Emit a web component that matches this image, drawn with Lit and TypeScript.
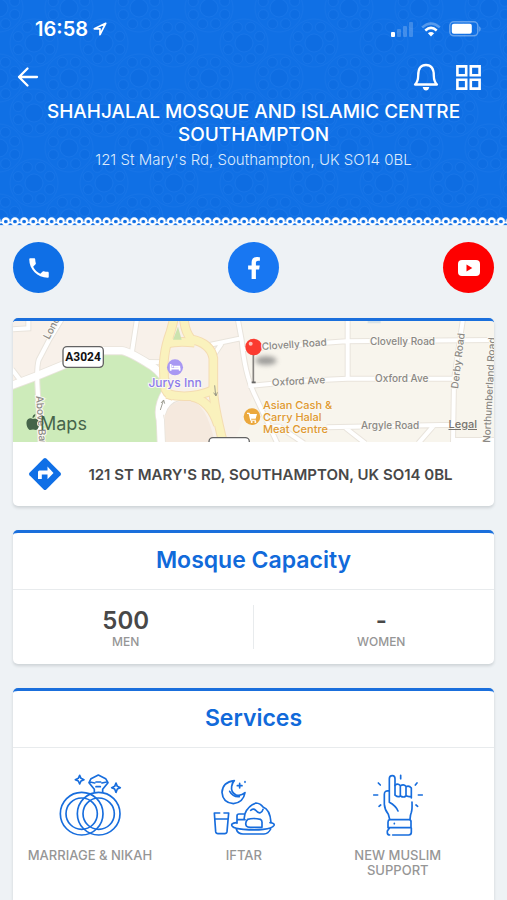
import { LitElement, html, svg, css } from "lit";
import { customElement } from "lit/decorators.js";

/* Geometric star tiling shown faintly behind the header. */
const ringDots = (cx: number, cy: number) =>
  [0, 45, 90, 135, 180, 225, 270, 315].map((a) => {
    const r = ((a + 22) * Math.PI) / 180;
    return svg`<circle cx=${cx + 17 * Math.cos(r)} cy=${cy + 17 * Math.sin(r)} r="5"/>`;
  });
const star = (cx: number, cy: number) => svg`<g><circle cx=${cx} cy=${cy} r="9"/>${ringDots(cx, cy)}
  <circle class="line" cx=${cx} cy=${cy} r="24"/></g>`;

@customElement("header-pattern")
class HeaderPattern extends LitElement {
  static styles = css`
    :host { display: block; }
    svg { display: block; width: 100%; height: 100%; }
    circle { fill: #0a69df; stroke: #2a80ec; stroke-width: 1; stroke-opacity: 0.6; fill-opacity: 0.8; }
    .line { fill: none; stroke-opacity: 0.5; }
    .base { fill: #1070e5; }
    .tiles { opacity: 0.5; }
  `;
  render() {
    return html`<svg aria-hidden="true">
      <defs>
        <pattern id="tile" width="70" height="70" patternUnits="userSpaceOnUse">
          ${star(34, 43)}${star(69, 8)}${star(-1, 8)}${star(69, 78)}${star(-1, 78)}
        </pattern>
      </defs>
      <rect class="base" width="100%" height="100%" />
      <rect class="tiles" width="100%" height="100%" fill="url(#tile)" />
    </svg>`;
  }
}

@customElement("lace-edge")
class LaceEdge extends LitElement {
  static styles = css`
    :host { display: block; height: 9px; background: #1070e5; }
    svg { display: block; width: 100%; height: 100%; }
  `;
  render() {
    return html`<svg aria-hidden="true">
      <defs>
        <pattern id="lace" x="1.2" width="9.17" height="9" patternUnits="userSpaceOnUse">
          <path d="M0 5.6H9.17" stroke="#fff" stroke-width="1.4" />
          <path d="M0 8.6H9.17" stroke="#eef2f5" stroke-width="1" />
          <circle cx="4.58" cy="4.5" r="3" fill="#1070e5" stroke="#fff" stroke-width="2.3" />
        </pattern>
      </defs>
      <rect width="100%" height="9" fill="url(#lace)" />
    </svg>`;
  }
}

@customElement("area-map")
class AreaMap extends LitElement {
  static styles = css`
    :host { display: block; position: relative; height: 121px; overflow: hidden; background: #f8f5ed; }
    svg { display: block; width: 100%; height: 100%; }
    text { font-family: Inter, "Liberation Sans", sans-serif; font-size: 10px; font-weight: 500; fill: #8b8884; stroke: #faf8f2; stroke-width: 2; paint-order: stroke; }
    .edge path { fill: none; stroke: #e9e4dc; }
    .road path { fill: none; stroke: #fff; }
    .amber path { fill: none; stroke: #f4dcb2; stroke-width: 29; }
    .yellow path { fill: none; stroke: #faf2bd; stroke-width: 23; }
    .w1 { stroke-width: 12; }
    .w2 { stroke-width: 22; }
    .edge .w1 { stroke-width: 18; }
    .edge .w2 { stroke-width: 27; }
    .hotel { fill: #8d7bea; font-size: 12px; }
    .shop { fill: #e0982f; font-size: 11px; }
    .shield { fill: #111; font-family: "Liberation Sans Narrow", Roboto, sans-serif; font-size: 12px; font-weight: 700; stroke: none; }
    .brand { fill: #46644a; font-size: 18px; font-weight: 400; stroke: none; }
    .legal { position: absolute; right: 17px; bottom: 11px; font: 500 11px/14px Inter, "Liberation Sans", sans-serif; color: #77746f; text-decoration: underline; }
  `;
  roads() {
    return svg`
      <path class="w2" d="M20 232L110 198L190 165L290 122H365Q385 124 440 158Q475 176 500 215"/>
      <path class="w1" d="M190 20L150 85L116 150Q110 170 112 220L122 400"/>
      <path class="w1" d="M412 20L396 125M440 156L500 157M39 58L85 55V25M36 178L62 212"/>
      <path class="w2" d="M498 245Q470 290 481 330L484 400M484 312Q495 268 540 258"/>
      <path class="w1" d="M712 20L725 90Q734 190 762 250L832 400M622 106L722 85M665 100L645 130"/>
      <path class="w1" d="M725 118L977 98L1037 94L1490 90M1043 20V205"/>
      <path class="w1" d="M745 228L912 212L1042 206L1370 206"/>
      <path class="w1" d="M1390 20L1362 210L1359 400M980 352L1362 344M1037 354L1096 400M1302 346L1255 400"/>
      <path class="w1" d="M838 350L912 400M790 350H840M1362 390H1490"/>`;
  }
  yellow() {
    return svg`
      <path d="M523 20Q514 62 504 88Q494 120 491 160L493 225Q497 252 520 258"/>
      <path d="M551 20Q554 66 574 88Q632 100 640 145V240Q640 280 671 405"/>
      <path d="M500 102Q530 92 584 98M500 252Q570 270 640 240M575 260Q630 270 654 345"/>`;
  }
  render() {
    return html`
      <svg viewBox="0 0 481 121" preserveAspectRatio="xMidYMid slice" role="img" aria-label="Map of the area around St Mary's Road">
        <defs>
          <filter id="soft" x="-50%" y="-80%" width="200%" height="260%"><feGaussianBlur stdDeviation="8" /></filter>
        </defs>
        <g transform="scale(0.33333) translate(-39 -33)">
          <path fill="#f8f1ea" d="M39 33H720L762 250L700 400H39Z" />
          <path fill="#cdebba" d="M39 235L110 205L200 165L290 130H365L440 165L490 215L495 250Q472 290 474 330V400H39Z" />
          <path fill="#f5e9de" d="M495 400V310Q510 272 570 270Q620 280 645 400Z" />
          <path fill="#d8e3e8" d="M1103 33H1142V40H1103Z" />
          <g class="edge">${this.roads()}</g>
          <g class="road">${this.roads()}</g>
          <g class="amber">${this.yellow()}</g>
          <g class="yellow">${this.yellow()}</g>
          <path fill="#cbe3ae" d="M534 50L545 89H519Z" />
          <g fill="none" stroke="#8b8b80" stroke-width="2.5">
            <path d="M481 300L490 272M483 279L491 270L494 281M644 226L647 256M641 248L648 258L652 247" />
          </g>
          <g fill="#fff" stroke="#636363" stroke-width="4">
            <rect x="189" y="110" width="121" height="62" rx="12" />
            <rect x="627" y="383" width="121" height="62" rx="12" />
          </g>
          <circle cx="525" cy="172" r="24" fill="#a898f3" />
          <path fill="none" stroke="#fff" stroke-width="5" d="M512 162V182M512 176H539V182M522 170H538V176" />
          <circle cx="518" cy="169" r="3" fill="#fff" />
          <circle cx="756" cy="320" r="25" fill="#eba83d" />
          <path fill="#fff" d="M741 308H748L751 312H771L767 326H753L754 329H768V332H751L746 312H741Z" />
          <circle cx="755" cy="336" r="3" fill="#fff" /><circle cx="766" cy="336" r="3" fill="#fff" />
          <ellipse cx="798" cy="152" rx="32" ry="13" fill="#777" opacity=".7" filter="url(#soft)" />
          <path stroke="#85827f" stroke-width="5" d="M760 132V218" />
          <path stroke="#666" stroke-width="5" d="M755 217H767" />
          <circle cx="761" cy="111" r="25" fill="#fb3b30" />
          <circle cx="752" cy="101" r="6" fill="#ffc0b9" />
        </g>
        <text x="70" y="40" class="shield" text-anchor="middle">A3024</text>
        <text transform="translate(36 19) rotate(-62)">London Rd</text>
        <text transform="translate(23 75) rotate(86)">Above Bar St</text>
        <text x="162" y="66" class="hotel" text-anchor="middle">Jurys Inn</text>
        <text transform="translate(249 29) rotate(-4)">Clovelly Road</text>
        <text x="357" y="24">Clovelly Road</text>
        <text transform="translate(259 65) rotate(-3)">Oxford Ave</text>
        <text x="362" y="61">Oxford Ave</text>
        <text x="348" y="108">Argyle Road</text>
        <text transform="translate(445 68) rotate(-83)">Derby Road</text>
        <text transform="translate(477 122) rotate(-87)">Northumberland Road</text>
        <text class="shop"><tspan x="250" y="88">Asian Cash &amp;</tspan><tspan x="250" y="100">Carry Halal</tspan><tspan x="250" y="112">Meat Centre</tspan></text>
        <path fill="#46644a" d="M20 98C17 96 14 98 13.500 101C13.200 105 15 108.500 17 109C18 109 19 108.400 20 108.400C21 108.400 22 109 23 109C24.500 108.500 25.300 107 26 105.500C23.500 104.500 23.300 101 25.500 99.700C24 97.500 22 97.500 20 98ZM19.500 97Q19.300 94 22.300 93Q22.500 96.200 19.500 97Z" />
        <text x="27" y="109" class="brand">Maps</text>
      </svg>
      <a class="legal" href="#legal">Legal</a>
    `;
  }
}

const ringsIcon = svg`<svg class="art" viewBox="54 39 192 192" aria-hidden="true">
  <circle cx="125" cy="161" r="64"/><circle cx="125" cy="161" r="47"/>
  <circle cx="176" cy="161" r="64"/><circle cx="176" cy="161" r="47"/>
  <path d="M163 96V88L147 68L153 56L175 45L197 56L204 68L188 88V96M150 66L164 69M200 66L186 69M168 66H182M168 80H181"/>
  <path d="M119 46L123 55L132 59L123 63L119 72L115 63L106 59L115 55ZM228 69L232 79L241 83L232 87L228 97L224 87L215 83L224 79Z"/>
</svg>`;

const mealIcon = svg`<svg class="art" viewBox="66 39 192 192" aria-hidden="true">
  <path d="M133 62Q98 66 96 97Q98 128 130 131Q160 128 165 98Q152 110 137 104Q122 96 125 79Q127 68 133 62ZM119 94Q129 112 148 110"/>
  <path d="M149 70V84M142 77H156M165 65V67"/>
  <path d="M89 159H73L77 215Q78 221 84 221H104Q110 221 111 215L116 159H102M74 177H114"/>
  <path d="M141 190V168Q141 162 147 162H161M141 179H165M162 178L165 161Q174 137 198 129Q211 130 219 141Q240 148 243 187M182 151Q191 144 197 151Q204 160 211 158Q217 156 219 148"/>
  <path d="M173 178Q190 173 211 178Q217 181 216 190V202H185Q173 203 169 198Q164 187 173 178Z"/>
  <path d="M139 188Q120 190 127 199Q134 206 160 208Q195 211 220 208Q247 205 252 196Q255 190 240 188M139 208Q143 222 159 222H222Q235 221 242 207"/>
</svg>`;

const handIcon = svg`<svg class="art" viewBox="48 39 192 192" aria-hidden="true">
  <path d="M144 153Q137 137 118 127V56Q118 47 127 47Q135 47 135 56V105M118 93Q103 90 103 103V133Q104 149 115 163L119 178M180 178Q181 163 184 157Q187 149 186 126"/>
  <path d="M135 76Q143 69 151 77V108Q144 113 136 106M151 78Q160 70 168 79V108Q160 114 152 108M168 80Q177 75 184 84V114M168 106Q173 112 184 109"/>
  <path d="M119 179H178Q184 180 183 187V203H114V187Q114 180 119 179ZM119 203L112 213V219Q113 225 119 225M128 225H176Q184 225 184 217V204M133 190V191"/>
  <path d="M152 46V56M85 69L91 75M71 105H83M87 139L92 135M201 69L196 75M205 105H217M198 135L203 139"/>
</svg>`;

@customElement("app-root")
class AppRoot extends LitElement {
  static styles = css`
    * { box-sizing: border-box; margin: 0; }
    :host { display: flex; flex-direction: column; min-height: 100vh; background: #eef2f5; color: #484848; font-family: Inter, "Liberation Sans", sans-serif; }
    a { color: inherit; text-decoration: none; }
    button { padding: 0; border: 0; background: none; color: inherit; display: block; cursor: pointer; }
    svg { display: block; }
    header { position: relative; color: #fff; }
    .pattern { position: absolute; inset: 0; }
    .head { position: relative; height: 217px; }
    .lace { position: relative; }
    .status, .time, .signals, .nav, .actions, .social, .address { display: flex; align-items: center; }
    .status { height: 58px; padding: 0 26px 0 35px; justify-content: space-between; }
    .time { gap: 5px; font-size: 20px; font-weight: 600; }
    .signals { gap: 8px; }
    .nav { height: 38px; padding: 0 26px 0 17px; justify-content: space-between; }
    .actions { gap: 17px; }
    .heading { padding: 4px 32px 0; text-align: center; }
    h1 { font-size: 19px; line-height: 23px; font-weight: 500; }
    .place { margin-top: 5px; font-size: 15px; line-height: 18px; font-weight: 300; color: #dceafc; }
    .social { padding: 16px 13px 25px; justify-content: space-between; }
    .round { width: 51px; height: 51px; border-radius: 50%; display: grid; place-items: center; color: #fff; background: #0f6fe6; }
    .facebook { background: #1877f2; }
    .youtube { background: #fe0000; }
    main { flex: 1; display: flex; flex-direction: column; gap: 24px; padding: 0 13px; }
    .card { background: #fff; border-top: 3px solid #1a6fdc; border-radius: 5px; box-shadow: 0 2px 3px rgba(60, 70, 80, 0.18); overflow: hidden; }
    .address { height: 64px; padding: 0 30px 0 15px; gap: 15px; }
    .address span { flex: 1; text-align: center; font-size: 15px; font-weight: 600; }
    h2 { height: 57px; line-height: 54px; border-bottom: 1px solid #e8ebed; text-align: center; font-size: 23px; font-weight: 600; color: #116ada; }
    .capacity { display: grid; grid-template-columns: 1fr 30px 1fr; height: 74px; text-align: center; }
    .stat { padding-top: 18px; }
    .split { place-self: center; width: 1px; height: 44px; background: #e8ebed; }
    .count { font-size: 24px; line-height: 26px; font-weight: 600; }
    .label { font-size: 12px; line-height: 15px; font-weight: 500; color: #969696; }
    .services { flex: 1; border-radius: 5px 5px 0 0; }
    .list { display: grid; grid-template-columns: repeat(3, 32%); padding: 25px 0 16px; }
    .item { display: flex; flex-direction: column; align-items: center; gap: 11px; text-align: center; }
    .item .label { font-size: 13px; }
    .short { width: 104px; }
    .art { width: 64px; height: 64px; fill: none; stroke: #176ddd; stroke-width: 5; stroke-linecap: round; stroke-linejoin: round; }
  `;
  service(icon: unknown, name: string, narrow = false) {
    return html`<a class="item" href="#service">${icon}<span class="label ${narrow ? "short" : ""}">${name}</span></a>`;
  }
  render() {
    return html`
      <header>
        <header-pattern class="pattern"></header-pattern>
        <div class="head">
          <div class="status">
            <div class="time">16:58
              <svg width="14" height="14" viewBox="0 0 14 14" fill="none" stroke="#fff" stroke-width="1.7" stroke-linejoin="round"><path d="M12.7 1.3L1.3 6.8H7V12.7Z" /></svg>
            </div>
            <div class="signals">
              <svg width="22" height="15" viewBox="0 0 22 15" fill="#fff"><rect y="10" width="4" height="5" rx="1" /><g opacity=".2"><rect x="6" y="7" width="4" height="8" rx="1" /><rect x="12" y="4" width="4" height="11" rx="1" /><rect x="18" width="4" height="15" rx="1" /></g></svg>
              <svg width="20" height="15" viewBox="0 0 20 15" fill="none" stroke="#fff" stroke-width="2.5"><path opacity=".3" d="M1.2 5.4Q10-2.5 18.8 5.4" /><path d="M4.3 8.5Q10 3.3 15.7 8.5" /><path d="M10 14.5L6.9 11.2Q10 8.6 13.1 11.2Z" fill="#fff" stroke="none" /></svg>
              <svg width="32" height="16" viewBox="0 0 32 16"><rect x=".8" y=".8" width="28" height="14" rx="4" fill="none" stroke="#fff" stroke-opacity=".35" stroke-width="1.5" /><rect x="2.8" y="2.8" width="20" height="10" rx="2" fill="#fff" /><path d="M30.3 5Q33 8 30.3 11Z" fill="#fff" opacity=".4" /></svg>
            </div>
          </div>
          <nav class="nav">
            <button aria-label="Back"><svg width="22" height="22" viewBox="0 0 22 22" fill="none" stroke="#fff" stroke-width="2.3" stroke-linecap="round" stroke-linejoin="round"><path d="M20 11H2M10.500 2.500L2 11L10.500 19.500" /></svg></button>
            <div class="actions">
              <button aria-label="Notifications"><svg width="26" height="28" viewBox="0 0 26 28" fill="none" stroke="#fff" stroke-width="2.3" stroke-linejoin="round"><path d="M2 21.500Q5.200 18.500 5.200 12.500Q5.200 2 13 2Q20.800 2 20.800 12.500Q20.800 18.500 24 21.500Z" /><path d="M9.700 24Q10.500 27.500 13 27.500Q15.500 27.500 16.300 24Z" fill="#fff" stroke="none" /></svg></button>
              <button aria-label="Menu"><svg width="25" height="25" viewBox="0 0 25 25" fill="none" stroke="#fff" stroke-width="2.600"><path d="M1.400 1.400H10.200V10.200H1.400ZM14.800 1.400H23.600V10.200H14.800ZM1.400 14.800H10.200V23.600H1.400ZM14.800 14.800H23.600V23.600H14.800Z" /></svg></button>
            </div>
          </nav>
          <div class="heading">
            <h1>SHAHJALAL MOSQUE AND ISLAMIC CENTRE SOUTHAMPTON</h1>
            <p class="place">121 St Mary's Rd, Southampton, UK SO14 0BL</p>
          </div>
        </div>
        <lace-edge class="lace"></lace-edge>
      </header>
      <div class="social">
        <a class="round" href="#call" aria-label="Call"><svg width="26" height="26" viewBox="0 0 24 24" fill="currentColor"><path d="M6.620 10.790c1.440 2.830 3.760 5.140 6.590 6.590l2.200-2.200c.270-.270.670-.360 1.020-.240 1.120.370 2.330.570 3.570.570.550 0 1 .450 1 1V20c0 .550-.450 1-1 1-9.390 0-17-7.610-17-17 0-.550.450-1 1-1h3.500c.550 0 1 .450 1 1 0 1.250.200 2.450.570 3.570.110.350.030.740-.250 1.020l-2.200 2.200z" /></svg></a>
        <a class="round facebook" href="#facebook" aria-label="Facebook"><svg width="14" height="22" viewBox="0 0 320 512" fill="currentColor"><path d="M279.140 288l14.220-92.660h-88.910v-60.130c0-25.350 12.420-50.060 52.240-50.060h40.420V6.260S260.430 0 225.360 0c-73.220 0-121.080 44.380-121.080 124.720v70.620H22.890V288h81.390v224h100.170V288z" /></svg></a>
        <a class="round youtube" href="#youtube" aria-label="YouTube"><svg width="22" height="16" viewBox="0 0 22 16"><rect width="22" height="16" rx="4" fill="#fff" /><path d="M8.500 4.500L14.300 8L8.500 11.500Z" fill="#fe0000" /></svg></a>
      </div>
      <main>
        <section class="card">
          <area-map></area-map>
          <a class="address" href="#directions">
            <svg width="34" height="34" viewBox="0 0 34 34"><path d="M15.700 1.500Q17 .300 18.300 1.500L32.500 15.700Q33.700 17 32.500 18.300L18.300 32.500Q17 33.700 15.700 32.500L1.500 18.300Q.300 17 1.500 15.700Z" fill="#0f6fe6" /><path d="M10 22V15Q10 13.500 11.500 13.500H19.500V9.500L25.500 16L19.500 22.300V17.500H13.800V22Z" fill="#fff" /></svg>
            <span>121 ST MARY'S RD, SOUTHAMPTON, UK SO14 0BL</span>
          </a>
        </section>
        <section class="card">
          <h2>Mosque Capacity</h2>
          <div class="capacity">
            <div class="stat"><p class="count">500</p><p class="label">MEN</p></div>
            <div class="split"></div>
            <div class="stat"><p class="count">-</p><p class="label">WOMEN</p></div>
          </div>
        </section>
        <section class="card services">
          <h2>Services</h2>
          <div class="list">
            ${this.service(ringsIcon, "MARRIAGE & NIKAH")}
            ${this.service(mealIcon, "IFTAR")}
            ${this.service(handIcon, "NEW MUSLIM SUPPORT", true)}
          </div>
        </section>
      </main>
    `;
  }
}
